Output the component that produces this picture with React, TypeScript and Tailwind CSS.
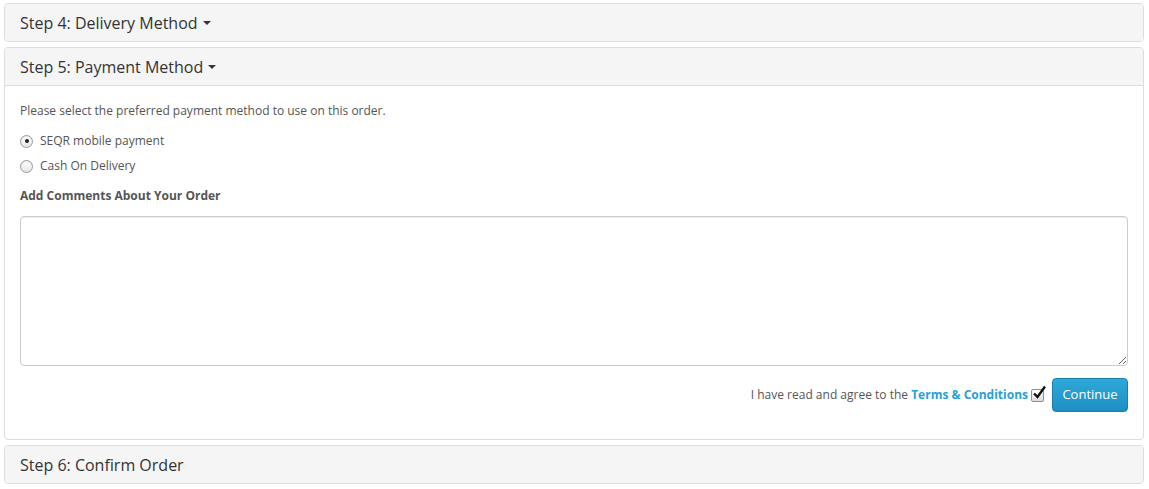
import React from 'react';

const font = { fontFamily: '"Open Sans", "Noto Sans", Arial, sans-serif' };

function Caret() {
  return <span className="ml-[5px] inline-block h-0 w-0 border-x-[4px] border-t-[4px] border-x-transparent border-t-[#333] align-middle" />;
}

function PanelHeading({ title, caret }: { title: string; caret?: boolean }) {
  return (
    <div className="flex h-[37px] items-center bg-[#f5f5f5] px-[15px] text-[16px] text-[#333]">
      <span>{title}</span>
      {caret && <Caret />}
    </div>
  );
}

function Radio({ checked, label }: { checked?: boolean; label: string }) {
  return (
    <label className="flex h-[18px] items-center gap-[7px] text-[12px] text-[#555]">
      <span className="flex h-[13px] w-[13px] items-center justify-center rounded-full border border-[#9a9a9a] bg-gradient-to-b from-white to-[#e6e6e6] shadow-[inset_0_1px_1px_rgba(0,0,0,0.08)]">
        {checked && <span className="h-[4px] w-[4px] rounded-full bg-[#222]" />}
      </span>
      {label}
    </label>
  );
}

export default function App() {
  return (
    <div style={font} className="flex flex-col gap-[5px] bg-white pb-[4px] pl-[4px] pr-[5px] pt-[3px]">
      <div className="overflow-hidden rounded-[4px] border border-[#ddd]">
        <PanelHeading title="Step 4: Delivery Method" caret />
      </div>

      <div className="overflow-hidden rounded-[4px] border border-[#ddd]">
        <div className="border-b border-[#ddd]">
          <PanelHeading title="Step 5: Payment Method" caret />
        </div>
        <div className="px-[15px] pb-[27px] pt-[16px] text-[12px] text-[#555]">
          <p className="leading-[18px]">Please select the preferred payment method to use on this order.</p>
          <div className="mt-[12px] flex flex-col gap-[7px]">
            <Radio checked label="SEQR mobile payment" />
            <Radio label="Cash On Delivery" />
          </div>
          <p className="mt-[12px] font-bold leading-[18px]">Add Comments About Your Order</p>
          <textarea
            className="mt-[11px] block h-[150px] w-full resize-y rounded-[4px] border border-[#ccc] bg-white shadow-[inset_0_1px_1px_rgba(0,0,0,0.075)] outline-none"
            readOnly
          />
          <div className="mt-[12px] flex items-center justify-end">
            <span className="leading-[18px]">
              I have read and agree to the{' '}
              <a href="#" className="font-bold text-[#2a9fd6]">Terms &amp; Conditions</a>
            </span>
            <span className="ml-[3px] mr-[8px] flex h-[13px] w-[13px] items-center justify-center rounded-[2px] border border-[#8f8f8f] bg-gradient-to-b from-white to-[#dcdcdc]">
              <svg viewBox="0 0 14 14" className="-mt-[4px] ml-[3px] h-[14px] w-[14px] overflow-visible">
                <path d="M2 7.5 L5.5 11 L13 0.5" fill="none" stroke="#111" strokeWidth="2.4" />
              </svg>
            </span>
            <button className="h-[34px] w-[76px] rounded-[4px] border border-[#1b7fae] bg-gradient-to-b from-[#2ca9d9] to-[#1f8ec4] text-[13px] text-white">
              Continue
            </button>
          </div>
        </div>
      </div>

      <div className="overflow-hidden rounded-[4px] border border-[#ddd]">
        <PanelHeading title="Step 6: Confirm Order" />
      </div>
    </div>
  );
}
